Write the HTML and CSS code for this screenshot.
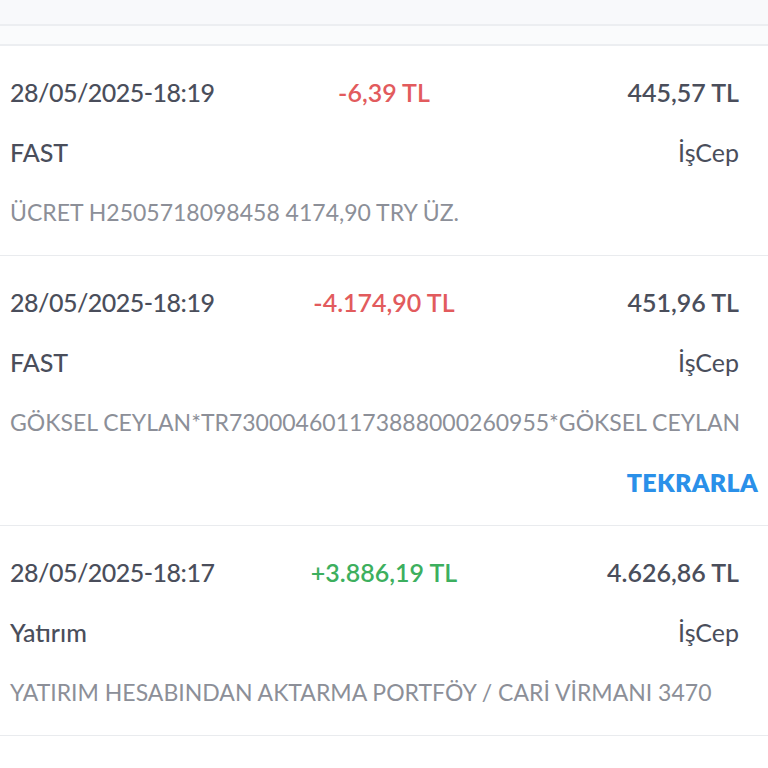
FILE: index.html
```html
<!DOCTYPE html>
<html lang="tr">
<head>
<meta charset="utf-8">
<link rel="stylesheet" href="styles.css">
</head>
<body>
<div class="topbar"></div>
<div class="strip"></div>
<div class="list">
  <div class="item">
    <div class="line">
      <span class="date">28/05/2025-18:19</span>
      <span class="amount neg">-6,39 TL</span>
      <span class="balance">445,57 TL</span>
    </div>
    <div class="line">
      <span class="type">FAST</span>
      <span></span>
      <span class="channel">İşCep</span>
    </div>
    <div class="desc">ÜCRET H2505718098458 4174,90 TRY ÜZ.</div>
  </div>
  <div class="item">
    <div class="line">
      <span class="date">28/05/2025-18:19</span>
      <span class="amount neg">-4.174,90 TL</span>
      <span class="balance">451,96 TL</span>
    </div>
    <div class="line">
      <span class="type">FAST</span>
      <span></span>
      <span class="channel">İşCep</span>
    </div>
    <div class="desc">GÖKSEL CEYLAN*TR730004601173888000260955*GÖKSEL CEYLAN</div>
    <div class="action"><span class="repeat">TEKRARLA</span></div>
  </div>
  <div class="item">
    <div class="line">
      <span class="date">28/05/2025-18:17</span>
      <span class="amount pos">+3.886,19 TL</span>
      <span class="balance">4.626,86 TL</span>
    </div>
    <div class="line">
      <span class="type">Yatırım</span>
      <span></span>
      <span class="channel">İşCep</span>
    </div>
    <div class="desc">YATIRIM HESABINDAN AKTARMA PORTFÖY / CARİ VİRMANI 3470</div>
  </div>
</div>
</body>
</html>
```
FILE: styles.css
```css
html, body {
  margin: 0;
  padding: 0;
  background: #ffffff;
  overflow: hidden;
}
body {
  width: 768px;
  height: 768px;
  font-family: "Lato", "Liberation Sans", sans-serif;
  color: #4a4e5b;
}
.topbar {
  height: 24px;
  background: #f8f9fb;
  border-bottom: 2px solid #eceef1;
}
.strip {
  height: 18px;
  background: #fafbfc;
  border-bottom: 2px solid #eceef1;
}
.list {
  display: flex;
  flex-direction: column;
}
.item {
  padding: 16px 10px 13px 10px;
  border-bottom: 1px solid #e9ebee;
  display: flex;
  flex-direction: column;
}
.line {
  height: 60px;
  display: grid;
  grid-template-columns: 1fr auto 1fr;
  align-items: center;
  font-size: 25px;
}
.date {
  font-weight: 500;
  letter-spacing: -0.5px;
}
.amount {
  font-weight: 600;
  text-align: center;
}
.neg { color: #e25b5d; }
.pos { color: #3daf5e; }
.balance {
  font-weight: 600;
  text-align: right;
  padding-right: 19px;
}
.type {
  font-weight: 500;
}
.channel {
  text-align: right;
  padding-right: 19px;
  font-weight: 400;
}
.desc {
  height: 60px;
  line-height: 60px;
  font-size: 23px;
  color: #8c8f98;
  white-space: nowrap;
  overflow: visible;
}
.action {
  height: 60px;
  display: flex;
  align-items: center;
  justify-content: flex-end;
}
.repeat {
  font-size: 25px;
  font-weight: 800;
  color: #2a90e9;
  letter-spacing: 0.3px;
}
```
